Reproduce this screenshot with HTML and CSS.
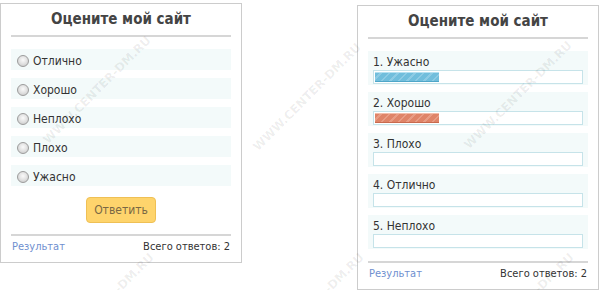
FILE: index.html
```html
<!DOCTYPE html>
<html lang="ru">
<head>
<meta charset="utf-8">
<title>Оцените мой сайт</title>
<link rel="stylesheet" href="styles.css">
</head>
<body>
<div class="page">
  <div class="poll poll-vote">
    <h2 class="poll-title">Оцените мой сайт</h2>
    <ul class="options">
      <li class="option"><span class="radio"></span>Отлично</li>
      <li class="option"><span class="radio"></span>Хорошо</li>
      <li class="option"><span class="radio"></span>Неплохо</li>
      <li class="option"><span class="radio"></span>Плохо</li>
      <li class="option"><span class="radio"></span>Ужасно</li>
    </ul>
    <div class="actions"><button class="btn" type="button">Ответить</button></div>
    <div class="poll-foot"><a class="link">Результат</a><span class="total">Всего ответов: 2</span></div>
  </div>

  <div class="poll poll-results">
    <h2 class="poll-title">Оцените мой сайт</h2>
    <ul class="results">
      <li class="result"><div class="label">1. Ужасно</div><div class="bar"><div class="fill fill-blue" style="width:31%"></div></div></li>
      <li class="result"><div class="label">2. Хорошо</div><div class="bar"><div class="fill fill-orange" style="width:31%"></div></div></li>
      <li class="result"><div class="label">3. Плохо</div><div class="bar"></div></li>
      <li class="result"><div class="label">4. Отлично</div><div class="bar"></div></li>
      <li class="result"><div class="label">5. Неплохо</div><div class="bar"></div></li>
    </ul>
    <div class="poll-foot"><a class="link">Результат</a><span class="total">Всего ответов: 2</span></div>
  </div>

  <div class="watermarks" aria-hidden="true">
    <span class="wm wm-1">WWW.CENTER-DM.RU</span>
    <span class="wm wm-2">WWW.CENTER-DM.RU</span>
    <span class="wm wm-3">WWW.CENTER-DM.RU</span>
    <span class="wm wm-4">WWW.CENTER-DM.RU</span>
    <span class="wm wm-5">WWW.CENTER-DM.RU</span>
    <span class="wm wm-6">WWW.CENTER-DM.RU</span>
  </div>
</div>
</body>
</html>
```

FILE: styles.css
```css
* { box-sizing: border-box; }
html, body { margin: 0; padding: 0; background: #fff; }
body {
  font-family: "DejaVu Sans Condensed", "DejaVu Sans", sans-serif;
  font-stretch: condensed;
  color: #333;
}
.page {
  position: relative;
  width: 600px;
  height: 290px;
  overflow: hidden;
  display: flex;
  align-items: flex-start;
  gap: 115px;
}
.poll {
  width: 242px;
  border: 1px solid #cccccc;
  padding: 0 10px;
  background: #fff;
}
.poll-vote { margin-top: 3px; }
.poll-results { margin-top: 5px; }

.poll-title {
  margin: 0;
  height: 33px;
  line-height: 31px;
  font-size: 15px;
  font-weight: bold;
  color: #444;
  text-align: center;
  border-bottom: 2px solid #d6d6d6;
}

.options, .results {
  list-style: none;
  margin: 12px 0 0;
  padding: 0;
}
.option {
  display: flex;
  align-items: center;
  height: 21px;
  padding: 2px 0 0 6px;
  margin-bottom: 8px;
  background: #f3fafa;
  font-size: 12px;
}
.option:last-child { margin-bottom: 0; }
.radio {
  width: 12px;
  height: 12px;
  margin-right: 4px;
  border-radius: 50%;
  border: 1px solid #9c9c9c;
  background: radial-gradient(circle at 50% 40%, #fafafa 0, #e4e4e4 45%, #c4c4c4 100%);
}

.actions {
  display: flex;
  justify-content: center;
  margin-top: 11px;
}
.btn {
  width: 70px;
  height: 26px;
  padding: 0;
  border: 1px solid #efc055;
  border-radius: 4px;
  background: #fed46c;
  font-family: inherit;
  font-stretch: condensed;
  font-size: 12px;
  color: #7a6844;
}

.poll-foot {
  display: flex;
  justify-content: space-between;
  margin-top: 11px;
  border-top: 2px solid #d6d6d6;
  padding: 2px 1px 6px;
  line-height: 18px;
  font-size: 11px;
}
.poll-results .poll-foot { margin-top: 12px; }
.link { color: #6f8fcf; }
.total { color: #333; }

.result {
  height: 34px;
  padding: 4px 5px 1px;
  margin-bottom: 7px;
  background: #f3fafa;
}
.result:last-child { margin-bottom: 0; }
.label {
  font-size: 12px;
  line-height: 15px;
  color: #333;
}
.bar {
  height: 14px;
  padding: 1px;
  border: 1px solid #c6e3e9;
  background: #fff;
}
.fill {
  height: 10px;
}
.fill-blue {
  background:
    linear-gradient(#b4e0f1 0, #b4e0f1 1px, transparent 1px, transparent 9px, #4fa6c8 9px),
    repeating-linear-gradient(135deg, #71bedc 0, #71bedc 4px, #8dcbe4 4px, #8dcbe4 6px);
}
.fill-orange {
  background:
    linear-gradient(#f2bca8 0, #f2bca8 1px, transparent 1px, transparent 9px, #c86a4e 9px),
    repeating-linear-gradient(135deg, #df8468 0, #df8468 4px, #e89c84 4px, #e89c84 6px);
}

.watermarks {
  position: absolute;
  inset: 0;
  pointer-events: none;
}
.wm {
  position: absolute;
  width: 160px;
  margin-left: -80px;
  margin-top: -8px;
  text-align: center;
  font-family: "DejaVu Sans", sans-serif;
  font-stretch: normal;
  font-weight: bold;
  font-size: 12px;
  line-height: 16px;
  color: rgba(0, 0, 0, 0.07);
  transform: rotate(-45deg);
  white-space: nowrap;
}
.wm-1 { left: 97px; top: 90px; }
.wm-2 { left: 307px; top: 97px; }
.wm-3 { left: 518px; top: 95px; }
.wm-4 { left: 100px; top: 307px; }
.wm-5 { left: 310px; top: 307px; }
.wm-6 { left: 520px; top: 307px; }
```
